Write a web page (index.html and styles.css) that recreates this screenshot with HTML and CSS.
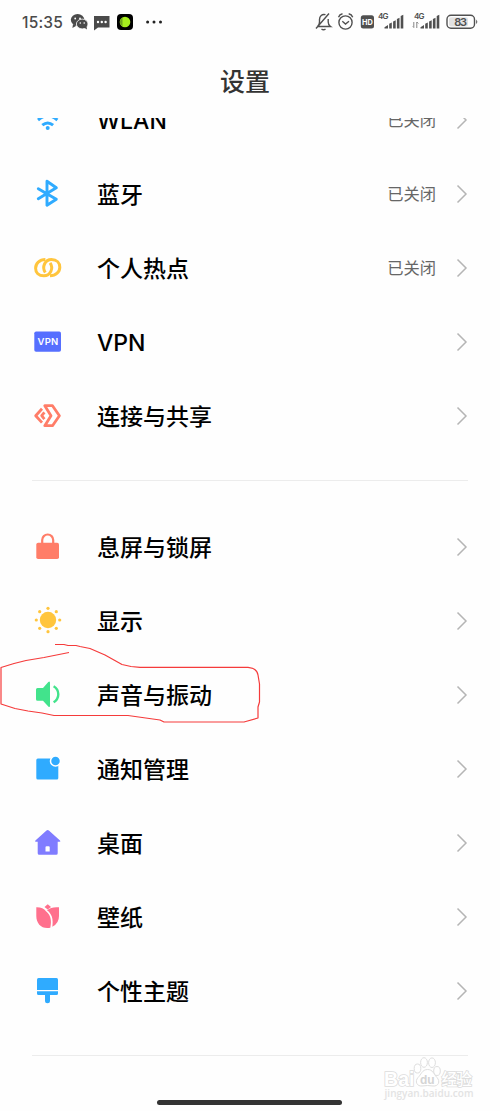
FILE: index.html
```html
<!DOCTYPE html>
<html lang="zh-CN">
<head>
<meta charset="utf-8">
<title>设置</title>
<link rel="stylesheet" href="styles.css">
</head>
<body>
<div class="phone">
  <header class="status">
    <span class="time">15:35</span>
    <svg class="status-left" width="98" height="20" viewBox="0 0 98 20">
      <g fill="#4a4a4a">
        <ellipse cx="7.600" cy="7.800" rx="6.800" ry="5.800"/><path d="M3 12l-.6 4 4-2.300z"/>
        <ellipse cx="12.200" cy="12" rx="5.800" ry="4.900" stroke="#fff" stroke-width=".8"/><path d="M14 15.500l3 2-.6-3.500z"/>
        <path d="M24 4h15.500v11.500H28L24 18.500z"/>
      </g>
      <g fill="#fff"><circle cx="5.200" cy="6.500" r=".9"/><circle cx="10" cy="6.500" r=".9"/><circle cx="10.300" cy="11" r=".8"/><circle cx="14.200" cy="11" r=".8"/><circle cx="28" cy="10" r="1.200"/><circle cx="31.800" cy="10" r="1.200"/><circle cx="35.600" cy="10" r="1.200"/></g>
      <rect x="47" y="2" width="16" height="16" rx="4" fill="#000"/><circle cx="55" cy="10" r="5.300" fill="#a6ee1d"/><path d="M52.500 5.500a5.300 5.300 0 0 0 0 9z" fill="#6da21c"/>
      <g fill="#222"><circle cx="77.600" cy="10" r="1.500"/><circle cx="84" cy="10" r="1.500"/><circle cx="90.500" cy="10" r="1.500"/></g>
    </svg>
    <svg class="status-right" width="166" height="22" viewBox="0 0 166 22">
      <g fill="none" stroke="#505050" stroke-width="1.400">
        <path d="M4 15.500h12.500c-1.600-1-2.300-2-2.300-4.500V8M11.500 3.700C8 2.700 5.500 5 5.500 8.500V11c0 2-.7 3.500-2 4.500M2 17.500L15 2.500M7.500 18q2 1.700 4 0"/>
        <circle cx="31.500" cy="11.500" r="6.600"/><path d="M28.300 10.300l3.200 2.700 3.500-2.700M24.500 6.200q1-2.800 4-3.400M38.700 6.200q-1-2.800-4-3.400"/>
        <rect x="133" y="4.300" width="27.500" height="13" rx="4"/>
      </g>
      <rect x="46.800" y="4.300" width="13.200" height="13.200" rx="2.500" fill="#505050"/>
      <rect x="135" y="6.200" width="19" height="9.200" rx="2" fill="#e2e2e2"/>
      <path d="M162.200 8.500q2.200 2.300 0 4.600z" fill="#505050"/>
      <text x="48" y="14.100" class="hd" textLength="10.800" lengthAdjust="spacingAndGlyphs">HD</text>
      <text x="64" y="8.300" class="net" textLength="10.500">4G</text>
      <text x="100" y="8.300" class="net" textLength="10.500">4G</text>
      <text x="140.300" y="14.800" class="battery" textLength="12.800">83</text>
      <g fill="#505050">
        <path id="bars" d="M70.500 17.500v-1.200l3.500-2.200v3.400zM75.200 12.800l2.600-1.200v5.900h-2.600zM79.100 10.500l2.600-1.200v8.200h-2.600zM82.900 8l2.600-1.200v10.700h-2.600zM86.700 5l2.600-1.200v13.700h-2.600z"/>
        <use href="#bars" x="36"/>
      </g>
      <path d="M99.800 11v5.500l-1-1M102.800 17v-6l1.500 1.500" fill="none" stroke="#777" stroke-width=".9"/>
    </svg>
  </header>
  <h1 class="title">设置</h1>

  <main class="list">
    <section class="group">
      <div class="row"><svg class="icon" viewBox="0 0 36 36"><g fill="none" stroke="#2fabff" stroke-width="3"><path d="M8 18Q17.700 9.500 27.400 18"/><path d="M12.300 23.200Q17.700 18.700 23.100 23.200"/></g><circle cx="17.700" cy="26.100" r="2" fill="#2fabff"/></svg><span class="label">WLAN</span><span class="value">已关闭</span><svg class="arrow" viewBox="0 0 12 20"><path d="M1.500 1.500L10 10l-8.500 8.500"/></svg></div>
      <div class="row"><svg class="icon" viewBox="0 0 36 36"><path d="M8.300 12.700L26.300 23.200 17 29.200V5.200L26.300 11.800 8.300 22.700" fill="none" stroke="#2fabff" stroke-width="2.900" stroke-linejoin="round" stroke-linecap="round"/></svg><span class="label">蓝牙</span><span class="value">已关闭</span><svg class="arrow" viewBox="0 0 12 20"><path d="M1.500 1.500L10 10l-8.500 8.500"/></svg></div>
      <div class="row"><svg class="icon" viewBox="0 0 36 36"><g fill="none" stroke="#ffc53d" stroke-width="3"><path id="link" d="M15.300 22.500C11.500 17 15 9.600 21.500 9.600C26.800 9.600 29.800 13 29.800 17.200C29.800 21.800 26 25.800 20 25.800"/><use href="#link" transform="rotate(180 17.700 17.700)"/></g></svg><span class="label">个人热点</span><span class="value">已关闭</span><svg class="arrow" viewBox="0 0 12 20"><path d="M1.500 1.500L10 10l-8.500 8.500"/></svg></div>
      <div class="row"><svg class="icon" viewBox="0 0 36 36"><rect x="4.300" y="7.500" width="26.700" height="20.300" rx="1.800" fill="#566fff"/><text x="7.600" y="21.300" class="vpn" textLength="20.500">VPN</text></svg><span class="label">VPN</span><svg class="arrow" viewBox="0 0 12 20"><path d="M1.500 1.500L10 10l-8.500 8.500"/></svg></div>
      <div class="row"><svg class="icon" viewBox="0 0 36 36"><g fill="none" stroke="#ff7d68" stroke-width="2.800" stroke-linejoin="round"><path d="M14.800 7.700H22.500L29.400 17.700 22.500 27.700H14.800L21 17.700z"/><path d="M12 10.800L5.700 17.700 12 24.600"/><path d="M14.400 14.300L11.700 17.700 14.400 21.100"/></g></svg><span class="label">连接与共享</span><svg class="arrow" viewBox="0 0 12 20"><path d="M1.500 1.500L10 10l-8.500 8.500"/></svg></div>
    </section>
    <section class="group">
      <div class="row"><svg class="icon" viewBox="0 0 36 36"><rect x="6.300" y="13.700" width="22.700" height="16.300" rx="1.800" fill="#ff7d68"/><path d="M12.200 15V11a5.500 5.500 0 0 1 11 0v4" fill="none" stroke="#ff7d68" stroke-width="2.200"/></svg><span class="label">息屏与锁屏</span><svg class="arrow" viewBox="0 0 12 20"><path d="M1.500 1.500L10 10l-8.500 8.500"/></svg></div>
      <div class="row"><svg class="icon" viewBox="0 0 36 36"><g fill="#ffc53d"><circle cx="18" cy="17" r="8.200"/><circle cx="18" cy="5.300" r="1.600"/><circle cx="18" cy="28.700" r="1.600"/><circle cx="6.300" cy="17" r="1.600"/><circle cx="29.700" cy="17" r="1.600"/><circle cx="9.700" cy="8.700" r="1.600"/><circle cx="26.300" cy="8.700" r="1.600"/><circle cx="9.700" cy="25.300" r="1.600"/><circle cx="26.300" cy="25.300" r="1.600"/></g></svg><span class="label">显示</span><svg class="arrow" viewBox="0 0 12 20"><path d="M1.500 1.500L10 10l-8.500 8.500"/></svg></div>
      <div class="row"><svg class="icon" viewBox="0 0 36 36"><path d="M7.500 11H13L18.300 5Q20 3.500 20 6V28.500Q20 31 18.300 29.500L13 23.700H7.500Q6 23.700 6 22.200V12.500Q6 11 7.500 11z" fill="#42e38c"/><path d="M23.600 9.300Q28.300 12 28.300 17.300T23.600 25.300" fill="none" stroke="#42e38c" stroke-width="2.400"/></svg><span class="label">声音与振动</span><svg class="arrow" viewBox="0 0 12 20"><path d="M1.500 1.500L10 10l-8.500 8.500"/></svg></div>
      <div class="row"><svg class="icon" viewBox="0 0 36 36"><rect x="6.300" y="7.500" width="22" height="21" rx="1.500" fill="#2fabff"/><circle cx="25.500" cy="10" r="5" fill="#2fabff" stroke="#fff" stroke-width="1.500"/></svg><span class="label">通知管理</span><svg class="arrow" viewBox="0 0 12 20"><path d="M1.500 1.500L10 10l-8.500 8.500"/></svg></div>
      <div class="row"><svg class="icon" viewBox="0 0 36 36"><path fill-rule="evenodd" d="M16.500 5.400Q17.700 4.500 18.900 5.400L30 15.400Q31 16.700 29.500 16.700H27.700V28.200Q27.700 29.700 26.200 29.700H9.200Q7.700 29.700 7.700 28.200V16.700H5.900Q4.400 16.700 5.400 15.400zM15.500 22.300V26.500H19.700V22.300Q19.700 21.300 18.700 21.300H16.500Q15.500 21.300 15.500 22.300z" fill="#807cff"/></svg><span class="label">桌面</span><svg class="arrow" viewBox="0 0 12 20"><path d="M1.500 1.500L10 10l-8.500 8.500"/></svg></div>
      <div class="row"><svg class="icon" viewBox="0 0 36 36"><g fill="#ff708d"><path d="M6.300 8.200Q13 8 16 12.200C20.500 16 22 21 20.300 28.700C12 30.500 6.300 25 6.300 17z"/><path d="M17 11.200Q21.500 7.500 29 8.300V17Q29 24.500 22.300 27.700C23.500 20 21.800 14.500 17 11.200z"/><path d="M14.500 8.100L17.700 5.200 21 8.100 17.700 10.500z"/></g></svg><span class="label">壁纸</span><svg class="arrow" viewBox="0 0 12 20"><path d="M1.500 1.500L10 10l-8.500 8.500"/></svg></div>
      <div class="row"><svg class="icon" viewBox="0 0 36 36"><g fill="#2fabff"><path d="M8.500 5H26.500Q28 5 28 6.500V17H7V6.500Q7 5 8.500 5z"/><path d="M7 18.300H28V20.500Q28 22 26.500 22H20V27.700a2.500 2.500 0 0 1-5 0V22H8.500Q7 22 7 20.500z"/></g></svg><span class="label">个性主题</span><svg class="arrow" viewBox="0 0 12 20"><path d="M1.500 1.500L10 10l-8.500 8.500"/></svg></div>
    </section>
  </main>

  <svg class="marker" width="270" height="90" viewBox="0 640 270 90"><path d="M55 644.500H64L68 645.500H76L80 646.500 90 648.500 105 655 122 664.500 131 666.500 140 667.300H248Q257 668 258 675L259.500 684V702L258 707V718L244 722H164L160 720 128 715.500H54L42 713 28 711 15 708.500 1 704V667.500L14 663.500 26 660.500 44 657.500 69 652.500"/></svg>

  <svg class="watermark" width="94" height="46" viewBox="0 0 94 46">
    <g fill="#fff" stroke="#dedede" stroke-width="1"><ellipse cx="36.500" cy="14.500" rx="3.300" ry="4.500"/><ellipse cx="43" cy="8.500" rx="3.400" ry="4.800"/><ellipse cx="51" cy="8.700" rx="3.400" ry="4.800"/><ellipse cx="56" cy="17" rx="3.300" ry="4.500"/><path d="M46.500 15.500C41 15.500 40 21 37 23.500C33.500 27.500 36 32.500 41 32Q46.500 31 52 32C57.500 32.500 59.500 27.500 56 23.500C52.500 20 52 15.500 46.500 15.500z"/></g>
    <text class="brand" x="3" y="31.500" textLength="30.500" lengthAdjust="spacingAndGlyphs">Bai</text>
    <text class="du" x="39" y="29.500" textLength="14.500">du</text>
    <text class="cn" x="60.500" y="30.700" textLength="30.500">经验</text>
    <text class="domain" x="3.500" y="43" textLength="89">jingyan.baidu.com</text>
  </svg>
  <div class="home-bar"></div>
</div>
</body>
</html>
```
FILE: styles.css
```css
* { box-sizing: border-box; }
body {
  margin: 0;
  background: #fff;
  font-family: "Noto Sans CJK SC", sans-serif;
}
.phone {
  position: relative;
  width: 500px;
  height: 1111px;
  overflow: hidden;
  display: flex;
  flex-direction: column;
  background: #fefefe;
}
.status {
  display: flex;
  align-items: center;
  height: 44px;
  padding: 0 20px 0 22px;
}
.time {
  width: 48px;
  padding-top: 1px;
  font-family: Inter, "Noto Sans CJK SC", sans-serif;
  font-size: 15.5px;
  font-weight: 500;
  letter-spacing: 0.2px;
  color: #4a4a4a;
}
.status-right { margin-left: auto; }
.status-right text, .vpn { font-family: Inter, "Noto Sans CJK SC", sans-serif; font-weight: 600; }
.status-right .hd { font-size: 8px; font-weight: 700; fill: #fff; }
.net { font-size: 8px; fill: #505050; }
.status-right .battery { font-size: 11px; fill: #505050; }
.title {
  margin: 0;
  height: 74px;
  line-height: 72px;
  text-align: center;
  font-size: 25px;
  font-weight: 500;
  color: #333;
  padding-right: 10px;
}
.list {
  height: 940px;
  flex: none;
  overflow: hidden;
}
.group:first-child { margin-top: -35px; }
.group::after {
  content: "";
  display: block;
  height: 1px;
  margin: 27px 32px 29px;
  background: #ececec;
}
.row {
  display: flex;
  align-items: center;
  height: 74px;
  padding: 0 32px 0 30px;
}
.icon { width: 36px; height: 36px; margin-right: 31px; }
.label {
  flex: 1;
  padding-top: 1px;
  font-family: Inter, "Noto Sans CJK SC", sans-serif;
  font-size: 23px;
  line-height: 36px;
  font-weight: 500;
  color: #000;
}
.value { padding-bottom: 2px; font-size: 16.3px; color: #666; margin-right: 20px; }
.arrow {
  width: 12px;
  height: 20px;
  fill: none;
  stroke: #b5b5b5;
  stroke-width: 1.5;
}
.vpn { font-size: 9.5px; fill: #fff; }
.marker {
  position: absolute;
  left: 0;
  top: 640px;
  fill: none;
  stroke: #f53b3b;
  stroke-width: 1.2;
  stroke-linejoin: round;
}
.watermark { position: absolute; left: 381px; top: 1054px; }
.brand, .cn { fill: #fff; stroke: #dcdcdc; stroke-width: 1.6; paint-order: stroke; }
.brand { font: 700 20px "Liberation Sans", sans-serif; }
.du { font: 700 12px "Liberation Sans", sans-serif; fill: #d4d4d4; }
.cn { font: 500 16px "Noto Sans CJK SC", sans-serif; }
.domain { font: 600 10px "Open Sans", sans-serif; fill: #e3e3e3; }
.home-bar {
  position: absolute;
  left: 157px;
  bottom: 6px;
  width: 185px;
  height: 5px;
  border-radius: 3px;
  background: #333;
}
```
